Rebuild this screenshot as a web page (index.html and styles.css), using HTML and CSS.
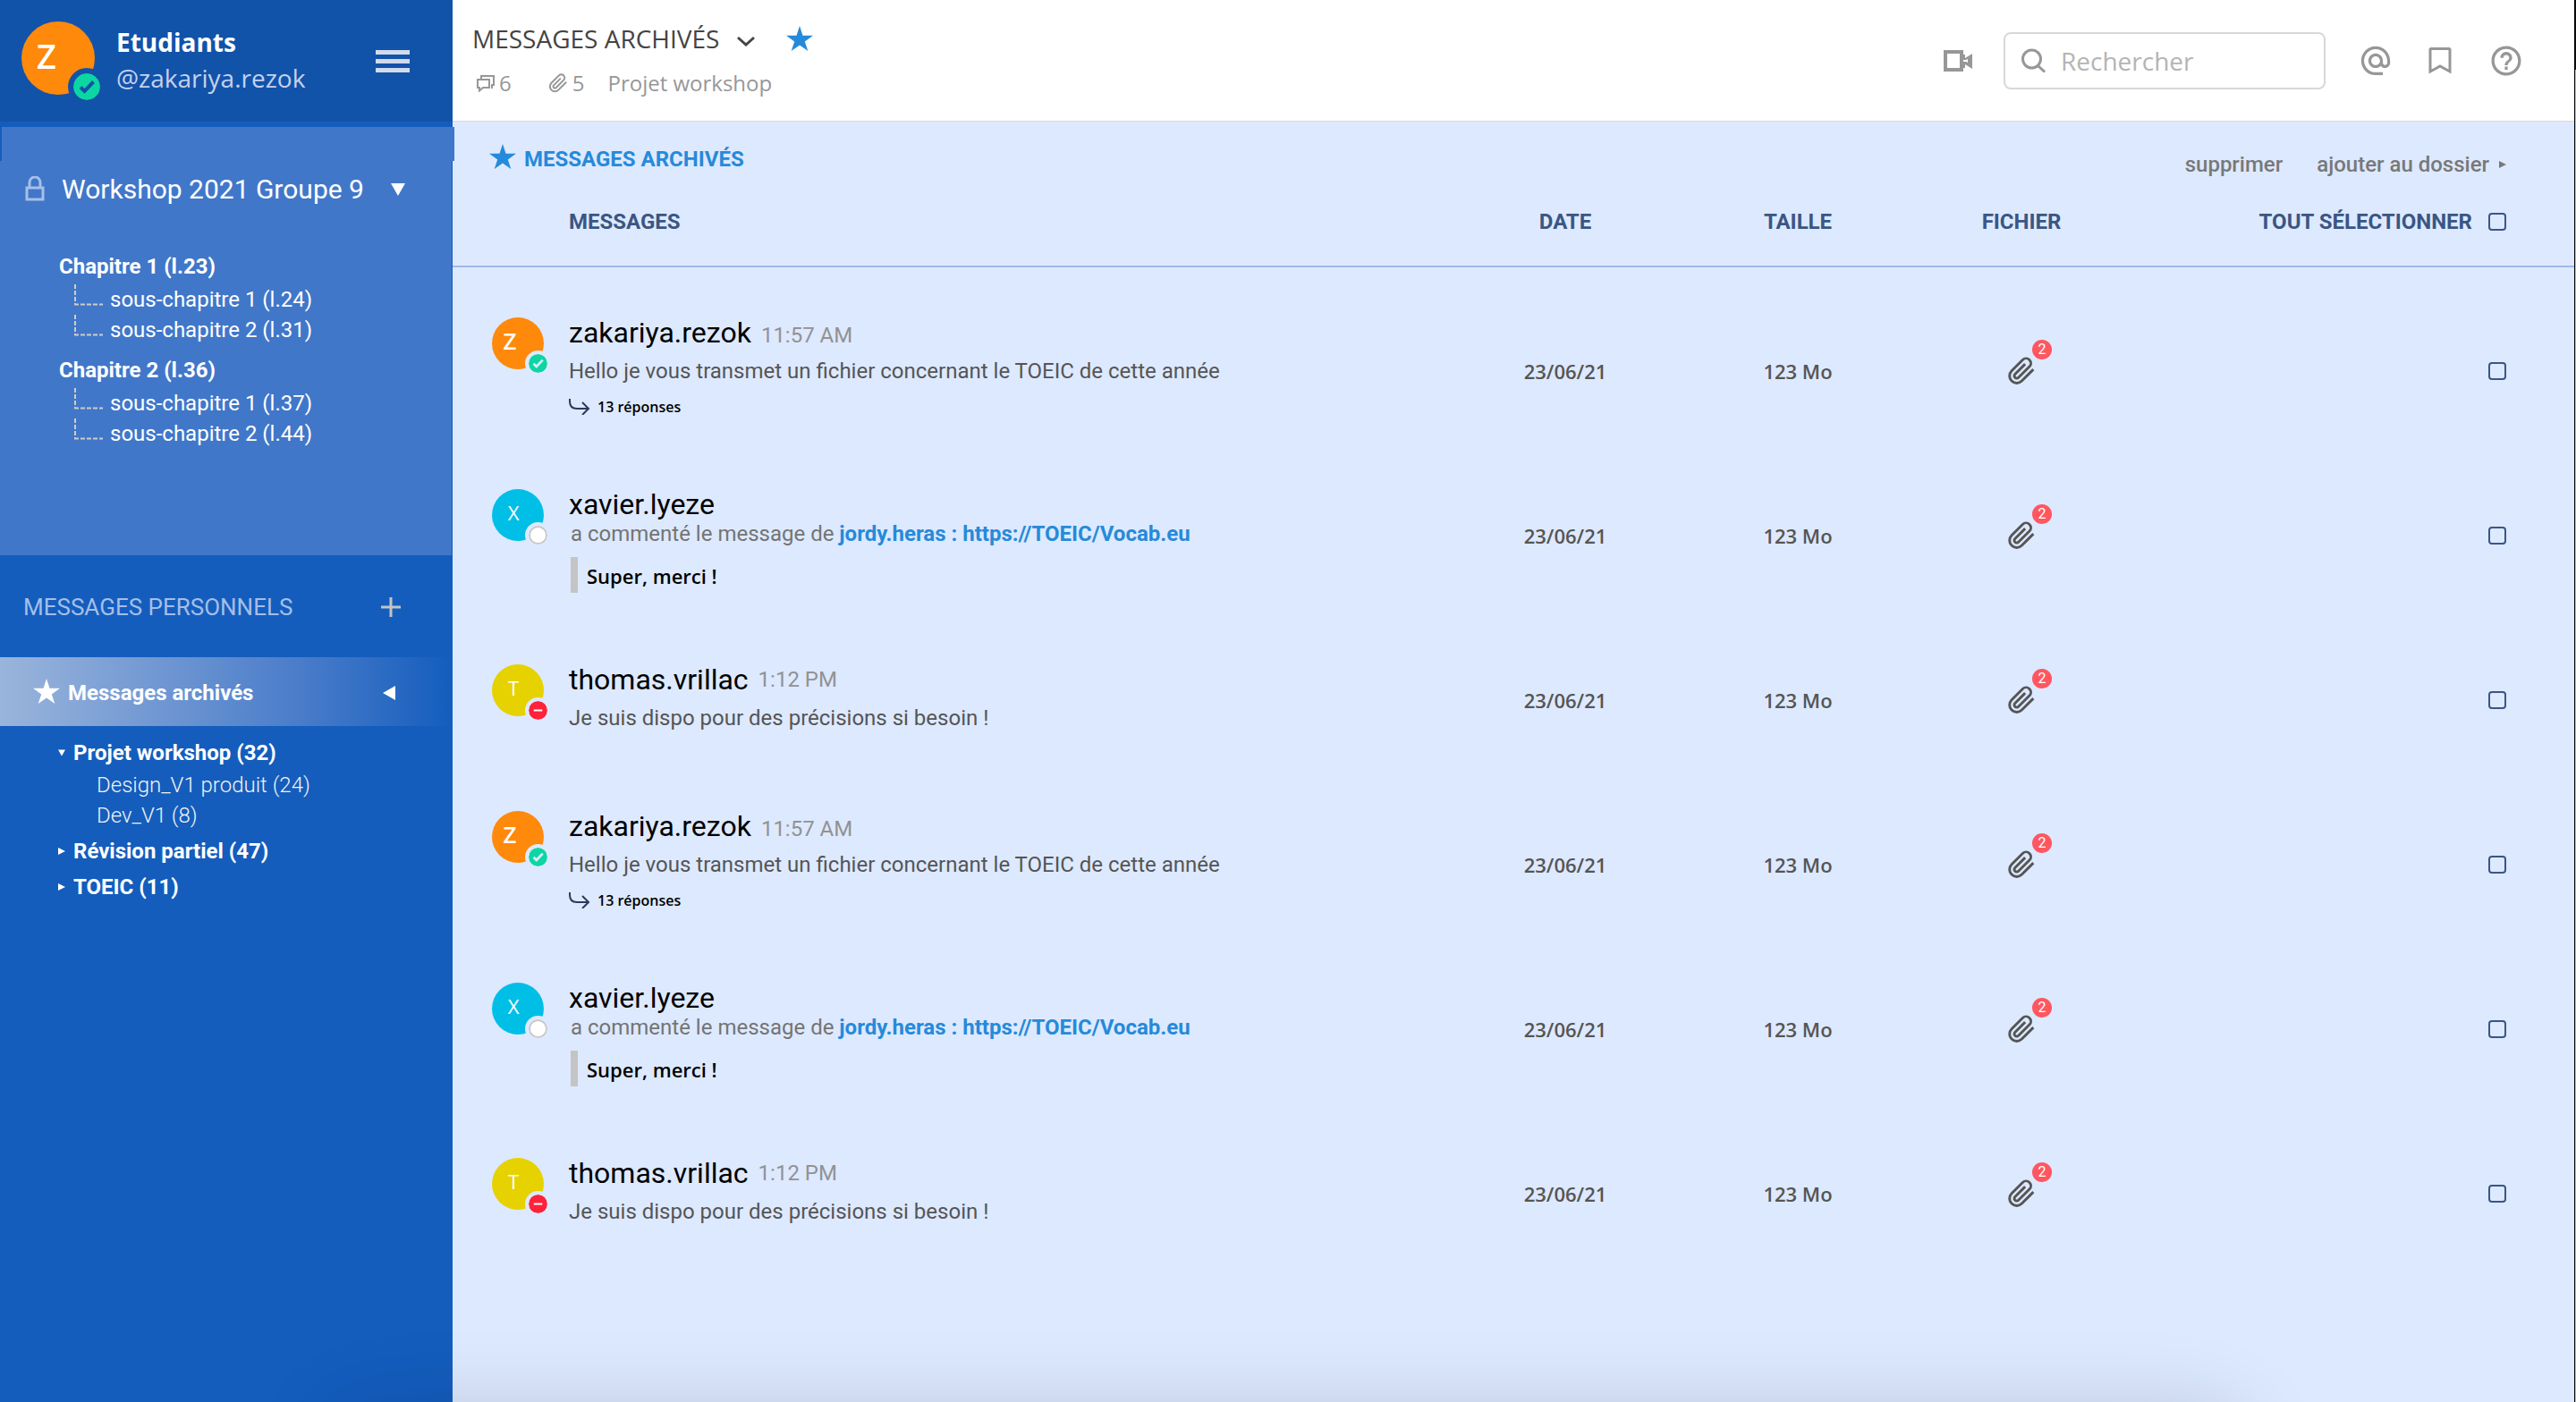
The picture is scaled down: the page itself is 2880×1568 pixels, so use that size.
FILE: index.html
```html
<!DOCTYPE html>
<html lang="fr">
<head>
<meta charset="utf-8">
<title>Messages archivés</title>
<link rel="stylesheet" href="styles.css">
</head>
<body>
<svg class="sprite" aria-hidden="true">
  <symbol id="star" viewBox="0 0 30 28"><path d="M15 0l3.5 10.7H30l-9.2 6.7L24.300 28 15 21.500 5.700 28l3.500-10.600L0 10.700h11.500z"/></symbol>
  <symbol id="clip" viewBox="0 0 24 24"><path d="M22 10.600l-9.700 9.700a6 6 0 0 1-8.500-8.500l9.200-9.200a4 4 0 0 1 5.700 5.700l-9.200 9.200a2 2 0 0 1-2.900-2.900l8.500-8.500" fill="none" stroke="currentColor" stroke-width="2.200"/></symbol>
  <symbol id="down" viewBox="0 0 16 14"><path d="M0 0h16L8 14z"/></symbol>
  <symbol id="left" viewBox="0 0 14 16"><path d="M14 0v16L0 8z"/></symbol>
  <symbol id="right" viewBox="0 0 8 8"><path d="M0 0v8l8-4z"/></symbol>
  <symbol id="branch" viewBox="0 0 32 24"><path d="M1 0v22M0 22.500h32" fill="none" stroke="currentColor" stroke-width="2" stroke-dasharray="5 2"/></symbol>
  <symbol id="reply" viewBox="0 0 24 18"><path d="M1 0v3q0 8 8 8h13M15 4l7 7-7 7" fill="none" stroke="currentColor" stroke-width="2"/></symbol>
  <symbol id="online" viewBox="0 0 30 30"><circle cx="15" cy="15" r="15" fill="#0cd6a2"/><path d="M8 15.500l4.500 4.500 10-10.500" fill="none" stroke="currentColor" stroke-width="4"/></symbol>
  <symbol id="offline" viewBox="0 0 22 22"><circle cx="11" cy="11" r="10" fill="#fff" stroke="#c8c8c8" stroke-width="2"/></symbol>
  <symbol id="busy" viewBox="0 0 22 22"><circle cx="11" cy="11" r="11" fill="#ff2239"/><path d="M6 11h10" stroke="#fff" stroke-width="2"/></symbol>
</svg>

<div class="app">
  <aside class="sidebar">
    <header class="profile">
      <div class="avatar avatar--large avatar--z">Z<svg class="avatar__status"><use href="#online"/></svg></div>
      <div class="profile__text">
        <strong>Etudiants</strong>
        <span>@zakariya.rezok</span>
      </div>
      <button class="burger" aria-label="Menu"><svg width="38" height="25" viewBox="0 0 38 25"><path d="M0 0h38v5H0zM0 10h38v5H0zM0 20h38v5H0z"/></svg></button>
    </header>

    <section class="group">
      <div class="group__top"></div>
      <div class="group__body">
        <button class="group__title">
          <svg width="22" height="30" viewBox="0 0 22 30"><path d="M2 13h18v13H2zM5 13V7a6 6 0 0 1 12 0v6" fill="none" stroke="currentColor" stroke-width="3"/></svg>
          Workshop 2021 Groupe 9
          <svg class="group__arrow" width="16" height="14"><use href="#down"/></svg>
        </button>
        <nav class="chapters">
          <a class="chapter" href="#c1">Chapitre 1 (l.23)</a>
          <a class="subchapter" href="#c1-1"><svg width="32" height="24"><use href="#branch"/></svg>sous-chapitre 1 (l.24)</a>
          <a class="subchapter" href="#c1-2"><svg width="32" height="24"><use href="#branch"/></svg>sous-chapitre 2 (l.31)</a>
          <a class="chapter" href="#c2">Chapitre 2 (l.36)</a>
          <a class="subchapter" href="#c2-1"><svg width="32" height="24"><use href="#branch"/></svg>sous-chapitre 1 (l.37)</a>
          <a class="subchapter" href="#c2-2"><svg width="32" height="24"><use href="#branch"/></svg>sous-chapitre 2 (l.44)</a>
        </nav>
      </div>
    </section>

    <div class="personal">
      <h2>MESSAGES PERSONNELS</h2>
      <button aria-label="Ajouter"><svg width="22" height="22" viewBox="0 0 22 22"><path d="M11 0v22M0 11h22" stroke="#c4c4c4" stroke-width="3"/></svg></button>
    </div>

    <button class="archived">
      <svg width="30" height="28"><use href="#star"/></svg>
      Messages archivés
      <svg class="archived__arrow" width="14" height="16"><use href="#left"/></svg>
    </button>
    <nav class="folders">
      <a class="folder" href="#f1"><svg width="8" height="8"><use href="#down"/></svg>Projet workshop (32)</a>
      <div class="subfolders">
        <a href="#f1-1">Design_V1 produit (24)</a>
        <a href="#f1-2">Dev_V1 (8)</a>
      </div>
      <a class="folder" href="#f2"><svg width="8" height="8"><use href="#right"/></svg>Révision partiel (47)</a>
      <a class="folder" href="#f3"><svg width="8" height="8"><use href="#right"/></svg>TOEIC (11)</a>
    </nav>
  </aside>

  <main class="main">
    <header class="topbar">
      <div>
        <h1 class="topbar__title">MESSAGES ARCHIVÉS
          <svg width="20" height="12" viewBox="0 0 20 12"><path d="M1 2l9 8 9-8" fill="none" stroke="currentColor" stroke-width="3"/></svg>
          <svg class="topbar__star" width="30" height="28"><use href="#star"/></svg>
        </h1>
        <div class="topbar__meta">
          <span class="count count--chat"><svg width="20" height="19" viewBox="0 0 20 19"><path d="M1 5h13v9H7l-4 3.500V14H1zM5 5V1h14v10h-2v4" fill="none" stroke="currentColor" stroke-width="2"/></svg>6</span>
          <span class="count"><svg width="22" height="22"><use href="#clip"/></svg>5</span>
          <span>Projet workshop</span>
        </div>
      </div>
      <div class="tools">
        <button aria-label="Appel vidéo"><svg width="32" height="24" viewBox="0 0 32 24"><path d="M2 2h18v20H2z" fill="none" stroke="currentColor" stroke-width="4"/><path d="M20 5h4v4l8-5v17l-8-5v4h-4v-7h5l2 1v-4l-2 1h-5z"/></svg></button>
        <label class="search">
          <svg width="28" height="28" viewBox="0 0 28 28"><circle cx="11.500" cy="12" r="10" fill="none" stroke="currentColor" stroke-width="3"/><path d="M18.500 19.500l7.500 7" stroke="currentColor" stroke-width="3"/></svg>
          <input type="search" placeholder="Rechercher" aria-label="Rechercher">
        </label>
        <button aria-label="Mentions"><svg width="34" height="34" viewBox="1.500 1.500 21 21"><path d="M12 1.950c-5.520 0-10 4.480-10 10s4.480 10 10 10h5v-2h-5c-4.340 0-8-3.660-8-8s3.660-8 8-8 8 3.660 8 8v1.430c0 .79-.71 1.570-1.500 1.570s-1.500-.78-1.500-1.570v-1.430c0-2.760-2.240-5-5-5s-5 2.240-5 5 2.240 5 5 5c1.380 0 2.640-.56 3.540-1.470.65.89 1.770 1.470 2.960 1.470 1.970 0 3.500-1.600 3.500-3.570v-1.430c0-5.520-4.480-10-10-10zm0 13c-1.660 0-3-1.340-3-3s1.340-3 3-3 3 1.340 3 3-1.340 3-3 3z"/></svg></button>
        <button aria-label="Favoris"><svg width="34" height="30" viewBox="0 0 34 30"><path d="M6 1.500h20a1 1 0 0 1 1 1V27l-11-6-11 6V2.500a1 1 0 0 1 1-1z" fill="none" stroke="currentColor" stroke-width="3"/></svg></button>
        <button aria-label="Aide"><svg width="34" height="34" viewBox="1.700 1.700 20.600 20.600"><path d="M11 18h2v-2h-2v2zm1-16C6.480 2 2 6.480 2 12s4.480 10 10 10 10-4.480 10-10S17.520 2 12 2zm0 18c-4.410 0-8-3.590-8-8s3.590-8 8-8 8 3.590 8 8-3.590 8-8 8zm0-14c-2.210 0-4 1.790-4 4h2c0-1.100.9-2 2-2s2 .9 2 2c0 2-3 1.750-3 5h2c0-2.250 3-2.500 3-5 0-2.210-1.790-4-4-4z"/></svg></button>
      </div>
    </header>

    <div class="section">
      <h2 class="section__title"><svg width="30" height="28"><use href="#star"/></svg>MESSAGES ARCHIVÉS</h2>
      <div class="section__actions">
        <button>supprimer</button>
        <button>ajouter au dossier <svg width="8" height="8"><use href="#right"/></svg></button>
      </div>
    </div>

    <table class="messages">
      <thead>
        <tr>
          <th class="col-message">MESSAGES</th>
          <th class="col-date">DATE</th>
          <th class="col-size">TAILLE</th>
          <th class="col-file">FICHIER</th>
          <th class="col-select"><label>TOUT SÉLECTIONNER <input type="checkbox"></label></th>
        </tr>
      </thead>
      <tbody>
        <tr class="row row--thread">
          <td><article class="message">
            <div class="avatar avatar--z">Z<svg class="avatar__status"><use href="#online"/></svg></div>
            <div><p class="author">zakariya.rezok <time>11:57 AM</time></p>
              <p class="text">Hello je vous transmet un fichier concernant le TOEIC de cette année</p>
              <a class="replies" href="#r1"><svg width="24" height="18"><use href="#reply"/></svg>13 réponses</a></div>
          </article></td>
          <td>23/06/21</td><td>123 Mo</td>
          <td><button class="file" aria-label="2 fichiers"><svg width="32" height="32"><use href="#clip"/></svg><span class="file__count">2</span></button></td>
          <td><input type="checkbox" aria-label="Sélectionner"></td>
        </tr>
        <tr class="row row--comment">
          <td><article class="message">
            <div class="avatar avatar--x">X<svg class="avatar__status"><use href="#offline"/></svg></div>
            <div><p class="author">xavier.lyeze</p>
              <p class="comment">a commenté le message de <a href="#v1">jordy.heras : https://TOEIC/Vocab.eu</a></p>
              <blockquote>Super, merci !</blockquote></div>
          </article></td>
          <td>23/06/21</td><td>123 Mo</td>
          <td><button class="file" aria-label="2 fichiers"><svg width="32" height="32"><use href="#clip"/></svg><span class="file__count">2</span></button></td>
          <td><input type="checkbox" aria-label="Sélectionner"></td>
        </tr>
        <tr class="row row--note">
          <td><article class="message">
            <div class="avatar avatar--t">T<svg class="avatar__status"><use href="#busy"/></svg></div>
            <div><p class="author">thomas.vrillac <time>1:12 PM</time></p>
              <p class="text">Je suis dispo pour des précisions si besoin !</p></div>
          </article></td>
          <td>23/06/21</td><td>123 Mo</td>
          <td><button class="file" aria-label="2 fichiers"><svg width="32" height="32"><use href="#clip"/></svg><span class="file__count">2</span></button></td>
          <td><input type="checkbox" aria-label="Sélectionner"></td>
        </tr>
        <tr class="row row--thread">
          <td><article class="message">
            <div class="avatar avatar--z">Z<svg class="avatar__status"><use href="#online"/></svg></div>
            <div><p class="author">zakariya.rezok <time>11:57 AM</time></p>
              <p class="text">Hello je vous transmet un fichier concernant le TOEIC de cette année</p>
              <a class="replies" href="#r2"><svg width="24" height="18"><use href="#reply"/></svg>13 réponses</a></div>
          </article></td>
          <td>23/06/21</td><td>123 Mo</td>
          <td><button class="file" aria-label="2 fichiers"><svg width="32" height="32"><use href="#clip"/></svg><span class="file__count">2</span></button></td>
          <td><input type="checkbox" aria-label="Sélectionner"></td>
        </tr>
        <tr class="row row--comment">
          <td><article class="message">
            <div class="avatar avatar--x">X<svg class="avatar__status"><use href="#offline"/></svg></div>
            <div><p class="author">xavier.lyeze</p>
              <p class="comment">a commenté le message de <a href="#v2">jordy.heras : https://TOEIC/Vocab.eu</a></p>
              <blockquote>Super, merci !</blockquote></div>
          </article></td>
          <td>23/06/21</td><td>123 Mo</td>
          <td><button class="file" aria-label="2 fichiers"><svg width="32" height="32"><use href="#clip"/></svg><span class="file__count">2</span></button></td>
          <td><input type="checkbox" aria-label="Sélectionner"></td>
        </tr>
        <tr class="row row--note">
          <td><article class="message">
            <div class="avatar avatar--t">T<svg class="avatar__status"><use href="#busy"/></svg></div>
            <div><p class="author">thomas.vrillac <time>1:12 PM</time></p>
              <p class="text">Je suis dispo pour des précisions si besoin !</p></div>
          </article></td>
          <td>23/06/21</td><td>123 Mo</td>
          <td><button class="file" aria-label="2 fichiers"><svg width="32" height="32"><use href="#clip"/></svg><span class="file__count">2</span></button></td>
          <td><input type="checkbox" aria-label="Sélectionner"></td>
        </tr>
      </tbody>
    </table>
  </main>
  <div class="edge"></div>
</div>
</body>
</html>
```
FILE: styles.css
```css
* { box-sizing: border-box; }

body {
  margin: 0;
  font: 24px/28px Roboto, "Liberation Sans", sans-serif;
  color: #555;
}

/* soft shade rising from the bottom of the window */
body::after {
  content: "";
  position: fixed;
  z-index: 2;
  top: calc(100% + 20px);
  left: 13%;
  right: 13%;
  height: 100px;
  border-radius: 40px;
  box-shadow: 0 0 100px rgba(0, 10, 30, .2);
  pointer-events: none;
}

h1, h2, p, blockquote { margin: 0; font-size: inherit; font-weight: inherit; }
a { color: inherit; text-decoration: none; }
button { padding: 0; border: 0; background: none; font: inherit; color: inherit; text-align: left; cursor: pointer; }
svg { display: block; flex: none; fill: currentColor; }
.sprite { position: absolute; width: 0; height: 0; }

input[type="checkbox"] {
  appearance: none;
  display: block;
  width: 20px;
  height: 20px;
  margin: 0;
  border: 2px solid #3a5684;
  border-radius: 4px;
}

.app {
  display: grid;
  grid-template-columns: 506px minmax(0, 1fr) 2px;
  min-height: 100vh;
}

.edge {
  border-left: 1px solid #000;
  background: linear-gradient(#111 78px, #c4c4c4 78px);
}

/* Avatars */
.avatar {
  position: relative;
  display: grid;
  place-items: center;
  flex: none;
  width: 58px;
  height: 58px;
  padding: 0 10px 6px 0;
  border-radius: 50%;
  font: 22px/28px "Open Sans", "Noto Sans", sans-serif;
  color: #fff;
}
.avatar--z { padding-right: 18px; background: #ff890b; font-size: 26px; font-weight: 600; }
.avatar--x { background: #00bfe6; }
.avatar--t { background: #e6d200; }
.avatar__status {
  position: absolute;
  right: -8px;
  bottom: -8px;
  width: 29px;
  height: 29px;
  border: 4px solid #dde9ff;
  border-radius: 50%;
  background: #dde9ff;
  color: #dde9ff;
}
.avatar--large { width: 82px; height: 82px; padding: 0 26px 6px 0; font-size: 38px; }
.avatar--large .avatar__status {
  right: -12px;
  bottom: -12px;
  width: 42px;
  height: 42px;
  border: 6px solid #1253aa;
  background: #1253aa;
  color: #1253aa;
}

/* Sidebar */
.sidebar { position: relative; z-index: 1; background: #145dbd; color: #fff; }

.profile { display: flex; height: 136px; padding: 24px 48px 30px 24px; background: #1253aa; }
.profile__text {
  display: flex;
  flex-direction: column;
  padding: 3px 0 0 24px;
  font: 28px/40px "Open Sans", "Noto Sans", sans-serif;
}
.profile__text strong { font-weight: 700; }
.profile__text span { color: #c4d2ee; }
.burger { margin-left: auto; padding-top: 6px; color: #d2dbec; }

.group { padding: 6px 1px 0 0; }
.group__top { height: 38px; margin: 0 -3px 0 2px; background: #4177c9; }
.group__body { min-height: 441px; padding: 14px 52px 0 28px; background: #4177c9; }
.group__title { display: flex; align-items: center; width: 100%; font-size: 30px; line-height: 36px; }
.group__title svg:first-child { margin-right: 19px; color: #a6bfe8; }
.group__arrow { margin-left: auto; }

.chapters { display: flex; flex-direction: column; padding: 54px 0 0 38px; }
.chapter { margin-bottom: 6px; font-weight: 700; }
.subchapter + .chapter { margin-top: 14px; }
.subchapter { display: flex; align-items: flex-start; gap: 8px; padding-left: 17px; line-height: 34px; }
.subchapter svg { color: #d0ccc4; }

.personal {
  display: flex;
  align-items: center;
  justify-content: space-between;
  padding: 42px 58px 40px 26px;
  font-size: 26px;
  line-height: 32px;
  color: #a4bfe8;
}

.archived {
  display: flex;
  align-items: center;
  width: 100%;
  height: 77px;
  padding: 2px 64px 0 37px;
  background: linear-gradient(90deg, #9ab5db, #7399d3 33%, #477bc9 68%, #145dbd);
  font-weight: 700;
}
.archived svg:first-child { margin: 0 9px 4px 0; }
.archived__arrow { margin-left: auto; }

.folders { display: flex; flex-direction: column; gap: 6px; padding: 13px 0 40px 65px; line-height: 34px; }
.folder { display: flex; align-items: center; gap: 9px; font-weight: 700; }
.subfolders { display: flex; flex-direction: column; padding-left: 43px; margin-top: -4px; font-weight: 300; color: #f2f2f2; }

/* Top bar */
.main { background: #dde9ff; }
.topbar {
  display: flex;
  justify-content: space-between;
  height: 136px;
  padding: 23px 59px 0 22px;
  border-bottom: 1px solid #d6d9dc;
  background: #fff;
  font: 24px/32px "Open Sans", "Noto Sans", sans-serif;
  color: #979797;
}
.topbar__title { display: flex; align-items: center; font-size: 28px; line-height: 40px; color: #444; }
.topbar__title svg { margin: 6px 0 0 20px; }
.topbar__title .topbar__star { margin: 0 0 0 35px; color: #268ada; }
.topbar__meta { display: flex; gap: 26px; padding: 14px 0 0 5px; }
.count { display: flex; align-items: center; gap: 5px; }
.count--chat { margin-right: 15px; }

.tools { display: flex; align-items: center; gap: 39px; height: 90px; }
.search {
  display: flex;
  align-items: center;
  gap: 16px;
  width: 360px;
  height: 64px;
  margin-left: -4px;
  padding: 0 18px;
  border: 2px solid #d8d8d8;
  border-radius: 8px;
}
.search input {
  min-width: 0;
  flex: 1;
  padding: 0;
  border: 0;
  outline: 0;
  background: none;
  font: 28px/40px "Open Sans", "Noto Sans", sans-serif;
}
.search input::placeholder { color: #b4b4b4; opacity: 1; }

/* Section heading */
.section { display: flex; align-items: flex-end; justify-content: space-between; padding: 28px 76px 0 41px; }
.section__title { display: flex; align-items: center; gap: 9px; padding-bottom: 6px; font-weight: 700; color: #268ada; }
.section__title svg { margin: -3px 0 3px; }
.section__actions { display: flex; gap: 38px; font-weight: 500; color: #787878; }
.section__actions button { display: flex; align-items: center; gap: 11px; }

/* Message table */
.messages { width: 100%; table-layout: fixed; border-collapse: collapse; }
.messages th {
  padding: 36px 0 35px;
  border-bottom: 2px solid #9db8e6;
  font-weight: 700;
  color: #3a5684;
}
.messages tbody::before { content: ""; display: block; height: 24px; }
.messages .col-message { padding-left: 130px; text-align: left; }
.col-date, .col-size { width: 260px; }
.col-file { width: 240px; }
.col-select { width: 498px; }
.col-select label { display: flex; align-items: center; justify-content: flex-end; gap: 18px; padding-right: 76px; }

.row { height: 184px; }
.row td { padding: 0; font: 600 22px/28px "Open Sans", "Noto Sans", sans-serif; text-align: center; }
.row td:first-child { padding-left: 44px; vertical-align: top; text-align: left; }
.row td:last-child { padding-right: 76px; }
.row td > input { margin-left: auto; }
.row--thread .message { padding-top: 32px; }
.row--comment .message { padding-top: 40px; }
.row--note .message { padding-top: 52px; }

.message { display: flex; gap: 28px; font: 24px/28px Roboto, "Liberation Sans", sans-serif; }
.author { display: flex; align-items: baseline; gap: 11px; font-size: 32px; line-height: 34px; color: #000; }
.author time { font-size: 24px; line-height: 28px; color: #929292; }
.row--note .author { align-items: center; }
.text { padding-top: 12px; }
.replies {
  display: flex;
  align-items: center;
  gap: 8px;
  padding-top: 14px;
  font: 600 16px/24px "Open Sans", "Noto Sans", sans-serif;
  color: #000;
}
.replies svg { color: #2c3a5c; }
.comment { padding: 2px 0 12px 2px; color: #747474; }
.comment a { font-weight: 700; color: #268ada; }
blockquote {
  height: 40px;
  margin-left: 2px;
  padding-left: 10px;
  border-left: 8px solid #c4c4c4;
  font: 600 22px/42px "Open Sans", "Noto Sans", sans-serif;
  color: #000;
}

.file { position: relative; display: block; width: 32px; margin: 0 auto; }
.file__count {
  position: absolute;
  top: -19px;
  right: -18px;
  width: 22px;
  height: 22px;
  border-radius: 50%;
  background: #ff5660;
  font: 16px/22px Roboto, "Liberation Sans", sans-serif;
  text-align: center;
  color: #fff;
}
```
